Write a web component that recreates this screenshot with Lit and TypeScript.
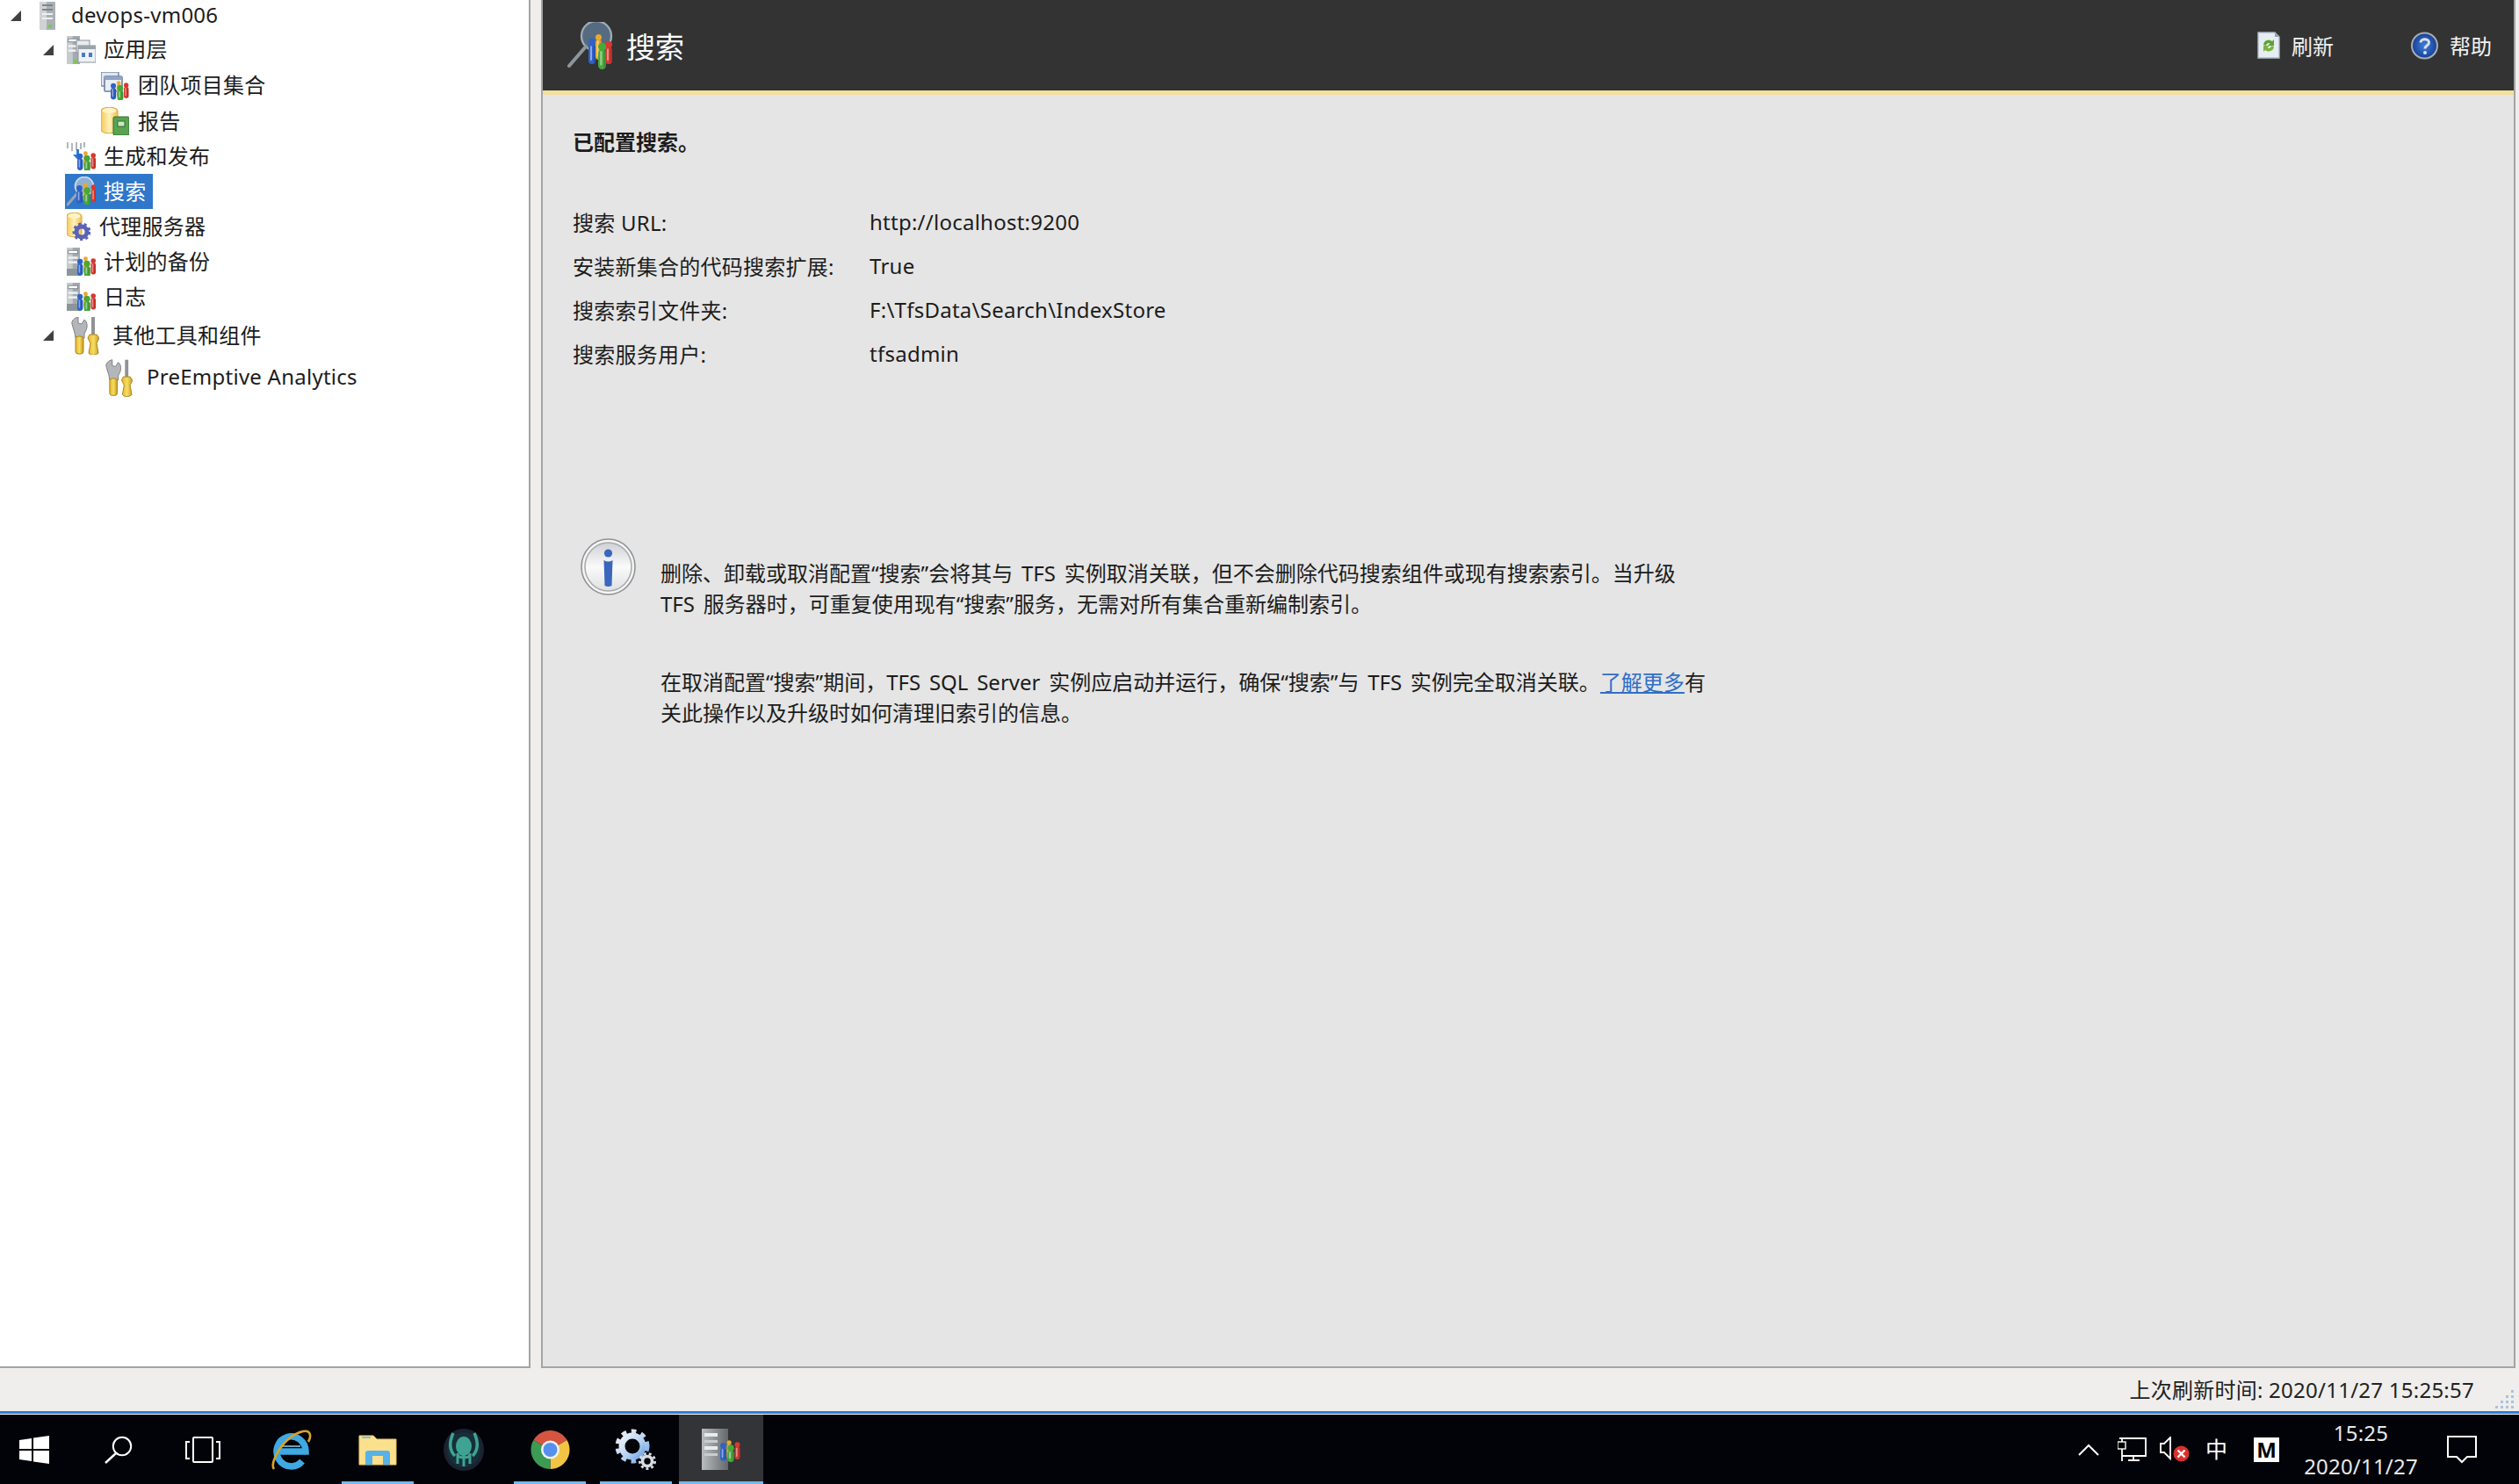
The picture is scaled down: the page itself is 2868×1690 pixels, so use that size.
import { LitElement, html, css, svg } from "lit";
import { customElement } from "lit/decorators.js";

const fig = (x: number, y: number, w: number, h: number, c: string, d: string) => svg`
  <rect x=${x} y=${y + w * 0.7} width=${w} height=${h - w * 0.7} rx=${w / 2} fill=${c} />
  <rect x=${x + w * 0.25} y=${y + w * 0.9} width=${w * 0.25} height=${h - w * 1.4} rx=${w * 0.12} fill="#fff" opacity=".45" />
  <rect x=${x + w * 0.7} y=${y + w * 0.9} width=${w * 0.3} height=${h - w * 1.1} rx=${w * 0.15} fill=${d} opacity=".35" />
  <circle cx=${x + w / 2} cy=${y + w * 0.35} r=${w * 0.5} fill=${c} />`;

// team figures in a 30x32 box
const team = (x: number, y: number, k: number) => svg`
  <g transform="translate(${x} ${y}) scale(${k})">
    ${fig(10, 0, 7, 26, "#e8a92c", "#b87a10")}
    ${fig(22, 3, 8, 25, "#d43a32", "#8e1a16")}
    ${fig(0, 4, 9, 26, "#2f62c8", "#173a8a")}
    ${fig(11, 7, 10, 25, "#47a83c", "#25701f")}
  </g>`;

const box = (w: number, h: number, body: unknown) =>
  html`<svg class="ico" width=${w} height=${h} viewBox="0 0 ${w} ${h}">${body}</svg>`;

const tower = (x: number, y: number, w: number, h: number) => svg`
  <rect x=${x} y=${y} width=${w} height=${h} fill="#a3abb1" />
  <rect x=${x} y=${y} width=${w * 0.45} height=${h} fill="#c6cbce" />
  <rect x=${x + w * 0.12} y=${y + h * 0.1} width=${w * 0.72} height=${h * 0.11} fill="#fff" stroke="#6f7980" stroke-width=".8" />
  <rect x=${x + w * 0.12} y=${y + h * 0.32} width=${w * 0.72} height=${h * 0.08} fill="#eef0f2" />
  <rect x=${x + w * 0.12} y=${y + h * 0.48} width=${w * 0.72} height=${h * 0.08} fill="#eef0f2" />`;

const serverIcon = box(18, 32, svg`
  <rect x="0" y="0" width="18" height="32" rx="1" fill="#aab0b5" />
  <rect x="0" y="0" width="8" height="32" fill="#cfd3d6" />
  <rect x="3" y="3" width="12" height="2" fill="#7e868c" /><rect x="3" y="8" width="12" height="2" fill="#7e868c" />
  <rect x="3" y="13" width="12" height="2" fill="#eef0f1" /><rect x="3" y="18" width="12" height="2" fill="#eef0f1" />
  <circle cx="12" cy="28" r="2" fill="#6fd03a" />`);

const appTierIcon = box(33, 32, svg`
  ${tower(0, 0, 15, 32)}
  <circle cx="10" cy="29" r="2" fill="#6fd03a" />
  <rect x="11" y="5" width="15" height="14" fill="#e8ebee" stroke="#8a9298" />
  <rect x="13" y="11" width="20" height="19" fill="#eef2f6" stroke="#8a9298" />
  <rect x="13" y="11" width="20" height="4" fill="#9aa3a9" />
  <rect x="17" y="19" width="4" height="5" fill="#4b7ac2" /><rect x="25" y="19" width="4" height="5" fill="#4b7ac2" />`);

const collectionIcon = box(32, 32, svg`
  <rect x="0" y="0" width="20" height="16" rx="1" fill="#dfe7f3" stroke="#7d8fa8" stroke-width="1.6" />
  <rect x="4" y="5" width="20" height="17" rx="1" fill="#e9eef6" stroke="#6f7f96" stroke-width="1.6" />
  <rect x="4" y="5" width="20" height="4" fill="#8ea4c6" />
  ${team(11, 11, 0.68)}`);

const reportIcon = box(32, 32, svg`
  <path d="M0 4 C0 -1 19 -1 19 4 V26 C19 31 0 31 0 26Z" fill="url(#gold)" stroke="#d8a73c" />
  <ellipse cx="9.5" cy="4" rx="8" ry="3" fill="#fff4c8" />
  <rect x="14" y="11" width="18" height="21" rx="1.5" fill="#5aa350" stroke="#2f6f33" />
  <rect x="19" y="16" width="8" height="6" fill="#cfe6c8" stroke="#2f6f33" />`);

const buildIcon = box(33, 32, svg`
  <g stroke="#9ea6ac" stroke-width="1.6">
    <path d="M1 0V7M6 1V10M11 0V9M16 1V8M20 0V6" />
  </g>
  <path d="M11 8V14H7L12.5 20L18 14H14V8Z" fill="#2f78d8" />
  ${team(12, 11, 0.7)}`);

const searchSel = box(33, 34, svg`
  <circle cx="20" cy="11" r="10.5" fill="#8fb0d6" stroke="#cfd9e4" stroke-width="1.6" />
  <path d="M13 18L1 32" stroke="#9aa5ae" stroke-width="3" stroke-linecap="round" />
  ${team(11, 8, 0.76)}`);

const proxyIcon = box(27, 32, svg`
  <path d="M0 4 C0 -1 17 -1 17 4 V24 C17 29 0 29 0 24Z" fill="url(#gold)" stroke="#d8a73c" />
  <ellipse cx="8.5" cy="4" rx="7" ry="3" fill="#fff4c8" />
  <circle cx="17" cy="22" r="6" fill="none" stroke="#5a62b8" stroke-width="5" />
  <circle cx="17" cy="22" r="9" fill="none" stroke="#5a62b8" stroke-width="3" stroke-dasharray="3.2 3.2" />`);

const backupIcon = box(33, 32, svg`
  ${tower(0, 0, 15, 32)}
  <rect x="0" y="24" width="15" height="8" fill="#8c959b" />
  ${team(12, 11, 0.7)}`);

const tools = (w: number, h: number) => html`<svg class="ico" width=${w} height=${h} viewBox="0 0 32 43">
  <path d="M4 18 L1 8 C0 4 4 1 8 0 L8 7 L12 8 L15 3 C19 6 19 12 16 17 L15 19 V24 H5 Z" fill="#b4b7ba" stroke="#7c8083" />
  <rect x="5" y="22" width="9" height="20" rx="3" fill="url(#gold2)" stroke="#a98518" />
  <rect x="23" y="0" width="4" height="21" fill="#8f9396" />
  <path d="M21 20 H29 L32 24 L29 30 L31 41 C28 44 22 44 20 41 L22 30 L19 24Z" fill="url(#gold2)" stroke="#a98518" />
</svg>`;

const searchHead = box(52, 54, svg`
  <circle cx="33" cy="16" r="17" fill="#566a80" stroke="#9fabb6" stroke-width="2.4" />
  <path d="M21 28L2 50" stroke="#8e969c" stroke-width="4" stroke-linecap="round" />
  ${fig(32, 15, 7, 28, "#e8a92c", "#b87a10")}
  ${fig(43, 23, 8, 25, "#d43a32", "#8e1a16")}
  ${fig(24, 20, 8, 28, "#2f62c8", "#173a8a")}
  ${fig(35, 25, 9, 29, "#47a83c", "#25701f")}`);

const refreshIcon = box(26, 31, svg`
  <path d="M1 1H20L25 6V30H1Z" fill="#e6edf3" stroke="#aeb9c2" stroke-width="1.4" />
  <path d="M20 1V6H25" fill="#8fa3b6" />
  <path d="M7 15 A6 6 0 0 1 17 11 L19 9 V16 H12 L14.5 13.5 A3 3 0 0 0 10 16Z" fill="#5fa22f" />
  <path d="M19 17 A6 6 0 0 1 9 21 L7 23 V16 H14 L11.5 18.5 A3 3 0 0 0 16 16Z" fill="#7ab33f" />`);

const helpIcon = html`<svg class="ico" width="31" height="32" viewBox="0 0 31 32">
  <circle cx="15.5" cy="16" r="14.5" fill="url(#help)" stroke="#a8adb2" stroke-width="2" />
  <path d="M11 12.5 C11 7.5 20.5 7.5 20.5 12.5 C20.5 16 16 15.5 16 19.5" fill="none" stroke="#d8dfe9" stroke-width="3" />
  <circle cx="16" cy="24" r="2" fill="#d8dfe9" />
</svg>`;

const infoIcon = html`<svg class="ico" width="63" height="65" viewBox="0 0 63 65">
  <ellipse cx="31.5" cy="32.5" rx="30.5" ry="31.5" fill="#f6f6f6" stroke="#8f9295" stroke-width="1.6" />
  <ellipse cx="31.5" cy="32.5" rx="26.5" ry="27.5" fill="url(#silver)" stroke="#a9abae" stroke-width="1.6" />
  <circle cx="31.5" cy="17" r="4.6" fill="#3a66bd" />
  <path d="M26.5 25 Q31.5 28 36.5 25 L35.5 54 Q31.5 56 27.5 54 Z" fill="#3a66bd" />
</svg>`;

const winIcon = box(34, 32, svg`
  <path d="M0 5 L14 3 V15 H0Z M16 2.6 L34 0 V15 H16Z M0 17 H14 V29 L0 27Z M16 17 H34 V32 L16 29.4Z" fill="#fff" />`);
const findIcon = box(34, 32, svg`
  <circle cx="21" cy="12" r="10.2" fill="none" stroke="#fff" stroke-width="2" />
  <path d="M14 20L2 31" stroke="#fff" stroke-width="2.4" />`);
const taskIcon = box(40, 30, svg`
  <rect x="9" y="1" width="22" height="28" rx="1" fill="none" stroke="#fff" stroke-width="2" />
  <path d="M5 6H1V25H5M35 6H39V25H35" fill="none" stroke="#fff" stroke-width="2" />`);
const ieIcon = box(46, 46, svg`
  <path d="M7 25H39A16.5 17 0 1 0 35 36" fill="none" stroke="#3fa9e2" stroke-width="7.5" />
  <path d="M11 19H33" stroke="#8bd4f5" stroke-width="1.5" />
  <path d="M3 45C-3 38 14 7 36 2C46 0 45 9 42 14" fill="none" stroke="#d7a52a" stroke-width="2.6" />`);
const folderIcon = box(44, 36, svg`
  <path d="M1 2H17L21 6H43V35H1Z" fill="#fbe08d" stroke="#f0c860" stroke-width="1" />
  <rect x="4" y="3" width="10" height="2" fill="#7cc0d8" />
  <path d="M8 35V22C8 20 9 19 11 19H33C35 19 36 20 36 22V35H28V25H16V35Z" fill="#56b2e8" />`);
const krakenIcon = box(46, 48, svg`
  <ellipse cx="23" cy="24" rx="23" ry="24" fill="#1b2230" />
  <ellipse cx="23" cy="24" rx="19" ry="20" fill="#173038" />
  <ellipse cx="23" cy="20" rx="9" ry="11" fill="#3fa393" />
  <path d="M11 5C6 16 7 25 13 31M35 5C40 16 39 25 33 31" fill="none" stroke="#3fa393" stroke-width="3.5" />
  <path d="M16 28V40M23 30V43M30 28V40M16 30C18 34 28 34 30 30" fill="none" stroke="#3fa393" stroke-width="3" />`);
const chromeIcon = box(45, 46, svg`
  <path d="M22.5 23L3.45 12A22 22 0 0 1 41.55 12Z" fill="#d65540" />
  <path d="M22.5 23L41.55 12A22 22 0 0 1 22.5 45Z" fill="#f2c443" />
  <path d="M22.5 23L22.5 45A22 22 0 0 1 3.45 12Z" fill="#3c9a55" />
  <circle cx="22.5" cy="23" r="10.5" fill="#f0f2f5" />
  <circle cx="22.5" cy="23" r="8" fill="#5590ec" />`);
const gearIcon = box(48, 47, svg`
  <circle cx="20" cy="20" r="12" fill="none" stroke="url(#gear)" stroke-width="7" />
  <circle cx="20" cy="20" r="17" fill="none" stroke="url(#gear)" stroke-width="5" stroke-dasharray="5.6 5.6" />
  <circle cx="37" cy="37" r="5.5" fill="none" stroke="#d9dee4" stroke-width="3.6" />
  <circle cx="37" cy="37" r="8.6" fill="none" stroke="#d9dee4" stroke-width="2.8" stroke-dasharray="3 3" />`);
const consoleIcon = box(44, 47, svg`
  <rect x="0" y="0" width="30" height="47" fill="url(#steel)" />
  <rect x="3" y="5" width="15" height="4" fill="#e8eaec" /><rect x="3" y="13" width="15" height="3" fill="#c9cdd0" />
  <rect x="3" y="20" width="15" height="4" fill="#e8eaec" /><rect x="3" y="28" width="15" height="3" fill="#c9cdd0" />
  ${team(21, 14, 0.75)}`);
const chevIcon = box(24, 14, svg`<path d="M1 13L12 2L23 13" fill="none" stroke="#fff" stroke-width="2" />`);
const netIcon = box(33, 27, svg`
  <path d="M2 1H32V21H5M18 21V26M12 26H25M5 1V27" fill="none" stroke="#fff" stroke-width="1.8" />
  <rect x="0" y="5" width="9" height="8" fill="#000" stroke="#fff" stroke-width="1.4" />`);
const volIcon = box(34, 29, svg`
  <path d="M1 8H5L12 1V25L5 18H1Z" fill="none" stroke="#fff" stroke-width="1.8" />
  <circle cx="24.5" cy="19.5" r="9" fill="#d9322e" />
  <path d="M20.5 15.5L28.5 23.5M28.5 15.5L20.5 23.5" stroke="#fff" stroke-width="2.4" />`);
const noteIcon = box(34, 32, svg`
  <path d="M1 1H33V24H23L17 30L11 24H1Z" fill="none" stroke="#fff" stroke-width="2" />`);
const gripIcon = box(22, 22, svg`
  <g fill="#a9c3dc">
    <rect x="18" y="1" width="3" height="3" /><rect x="18" y="7" width="3" height="3" /><rect x="12" y="7" width="3" height="3" />
    <rect x="18" y="13" width="3" height="3" /><rect x="12" y="13" width="3" height="3" /><rect x="6" y="13" width="3" height="3" />
    <rect x="18" y="19" width="3" height="3" /><rect x="12" y="19" width="3" height="3" /><rect x="6" y="19" width="3" height="3" /><rect x="0" y="19" width="3" height="3" />
  </g>`);

interface Row { h: number; ix: number; tx: number; tw?: number; icon: unknown; text: string; sel?: boolean; }
const rows: Row[] = [
  { h: 36, tw: 12, ix: 45, tx: 81, icon: serverIcon, text: "devops-vm006" },
  { h: 41, tw: 49, ix: 76, tx: 118, icon: appTierIcon, text: "应用层" },
  { h: 41, ix: 115, tx: 157, icon: collectionIcon, text: "团队项目集合" },
  { h: 40, ix: 115, tx: 157, icon: reportIcon, text: "报告" },
  { h: 40, ix: 76, tx: 118, icon: buildIcon, text: "生成和发布" },
  { h: 40, ix: 74, tx: 118, icon: searchSel, text: "搜索", sel: true },
  { h: 40, ix: 76, tx: 113, icon: proxyIcon, text: "代理服务器" },
  { h: 40, ix: 76, tx: 118, icon: backupIcon, text: "计划的备份" },
  { h: 40, ix: 76, tx: 118, icon: backupIcon, text: "日志" },
  { h: 48, tw: 49, ix: 81, tx: 128, icon: tools(32, 43), text: "其他工具和组件" },
  { h: 48, ix: 120, tx: 167, icon: tools(31, 43), text: "PreEmptive Analytics" },
];

const details: [string, string][] = [
  ["搜索 URL:", "http://localhost:9200"],
  ["安装新集合的代码搜索扩展:", "True"],
  ["搜索索引文件夹:", "F:\\TfsData\\Search\\IndexStore"],
  ["搜索服务用户:", "tfsadmin"],
];

@customElement("app-root")
export class AppRoot extends LitElement {
  static styles = css`
    :host {
      display: flex;
      flex-direction: column;
      width: 2868px;
      height: 1690px;
      overflow: hidden;
      background: #efeeec;
      color: #1c1c1c;
      font-family: "Noto Sans", "Noto Sans CJK SC", sans-serif;
      font-size: 24px;
    }
    .defs { display: block; width: 0; height: 0; }
    .ico { display: block; flex: none; filter: blur(0.45px); }
    .main { display: flex; height: 1558px; flex: none; }
    .tree {
      width: 604px;
      flex: none;
      box-sizing: border-box;
      background: #fff;
      border-right: 2px solid #a2a4a6;
      border-bottom: 2px solid #a2a4a6;
      letter-spacing: 0.25px;
    }
    .row { display: flex; align-items: center; white-space: nowrap; }
    .lead { flex: none; display: flex; align-items: center; }
    .twist {
      width: 0; height: 0;
      border-style: solid;
      border-width: 0 0 12px 12px;
      border-color: transparent transparent #404040 transparent;
    }
    .item { display: flex; align-items: center; height: 100%; }
    .item .lbl { padding-bottom: 4px; }
    .slot { flex: none; }
    .item.sel {
      background: #2f77ca;
      color: #fff;
      padding-left: 2px;
      padding-right: 7px;
    }
    .panel {
      margin-left: 12px;
      width: 2248px;
      flex: none;
      box-sizing: border-box;
      background: #e5e5e5;
      border-left: 2px solid #a2a4a6;
      border-right: 2px solid #a2a4a6;
      border-bottom: 2px solid #a2a4a6;
      display: flex;
      flex-direction: column;
    }
    .head {
      height: 103px;
      flex: none;
      background: #333333;
      color: #fff;
      display: flex;
      align-items: center;
      padding-left: 28px;
      box-sizing: border-box;
    }
    .accent { height: 5px; flex: none; background: #f4df9f; }
    .title { font-size: 33px; margin-left: 15px; }
    .spacer { flex: 1; }
    .tool { display: flex; align-items: center; color: #f2f2f2; }
    .tool .lab { margin-left: 13px; }
    .tool.a { margin-right: 88px; }
    .tool.b { margin-right: 25px; }
    .body { padding: 29px 0 0 34px; }
    .ok { height: 50px; line-height: 50px; font-weight: 700; }
    .kv {
      display: grid;
      grid-template-columns: 338px 1fr;
      grid-auto-rows: 50px;
      margin-top: 40px;
      align-items: center;
      letter-spacing: 0.25px;
    }
    .note { display: flex; margin: 186px 0 0 9px; }
    .paras { margin-left: 28px; padding-top: 23px; line-height: 34.5px; white-space: nowrap; word-spacing: 3.5px; }
    .paras p { margin: 0 0 55px; }
    a { color: #2f6fc8; text-decoration: underline; }
    .status {
      height: 49px;
      flex: none;
      display: flex;
      justify-content: flex-end;
      align-items: center;
      padding-right: 5px;
    }
    .status .txt { margin-right: 24px; margin-top: -2px; color: #222; letter-spacing: 0.25px; }
    .status .grip { align-self: flex-end; margin-bottom: 3px; }
    .sep { height: 4px; flex: none; background: #2d7dd8; border-bottom: 1px solid #fff; box-sizing: border-box; }
    .bar { flex: 1; background: #020308; display: flex; color: #e9e9e9; }
    .cell { flex: none; display: flex; align-items: center; justify-content: center; box-sizing: border-box; position: relative; }
    .start { width: 78px; }
    .find { width: 114px; }
    .tv { width: 78px; margin-right: 13px; }
    .app { width: 98px; }
    .app.run::after, .app.cur::after {
      content: "";
      position: absolute;
      left: 8px; right: 8px; bottom: 0;
      height: 3px;
      background: #76b9ed;
    }
    .app.cur { width: 96px; background: #333438; }
    .app.cur::after { left: 0; right: 0; }
    .tray { margin-left: auto; display: flex; align-items: center; padding-right: 48px; }
    .zh { font-size: 25px; color: #fff; margin: 0 30px 0 18px; line-height: 1; }
    .m {
      width: 29px; height: 28px; background: #fff; color: #000; font-weight: 700; font-size: 24px;
      display: flex; align-items: center; justify-content: center;
    }
    .clock { width: 130px; margin: 0 33px 0 28px; text-align: center; line-height: 38px; white-space: nowrap; letter-spacing: 0.2px; }
    .vol { margin: 0 0 0 15px; }
    .net { margin-left: 21px; }
  `;

  render() {
    return html`
      <svg class="defs">
        <defs>
          <linearGradient id="gold" x1="0" x2="1" y1="0" y2="0"><stop offset="0" stop-color="#f5c858" /><stop offset=".5" stop-color="#fff1b8" /><stop offset="1" stop-color="#f0c050" /></linearGradient>
          <linearGradient id="gold2" x1="0" x2="1" y1="0" y2="0"><stop offset="0" stop-color="#e2b62e" /><stop offset=".5" stop-color="#f6dc62" /><stop offset="1" stop-color="#c49a1c" /></linearGradient>
          <linearGradient id="silver" x1="0" x2="0" y1="0" y2="1"><stop offset="0" stop-color="#cfd1d4" /><stop offset=".5" stop-color="#fafafa" /><stop offset="1" stop-color="#dfe0e2" /></linearGradient>
          <radialGradient id="help"><stop offset="0" stop-color="#3f7fdc" /><stop offset="1" stop-color="#173f96" /></radialGradient>
          <linearGradient id="gear" x1="0" x2="1" y1="0" y2="1"><stop offset="0" stop-color="#eef3fa" /><stop offset=".6" stop-color="#b3d0f2" /><stop offset="1" stop-color="#6fa2e0" /></linearGradient>
          <linearGradient id="steel" x1="0" x2="1" y1="0" y2="0"><stop offset="0" stop-color="#b9bdbf" /><stop offset="1" stop-color="#63686b" /></linearGradient>
        </defs>
      </svg>
      <div class="main">
        <div class="tree">
          ${rows.map(
            (r) => html`
              <div class="row" style="height:${r.h}px">
                <div class="lead" style="width:${r.ix}px">
                  ${r.tw ? html`<div class="twist" style="margin-left:${r.tw}px"></div>` : ""}
                </div>
                <div class="item ${r.sel ? "sel" : ""}">
                  <div class="slot" style="width:${r.tx - r.ix - (r.sel ? 2 : 0)}px">${r.icon}</div>
                  <span class="lbl">${r.text}</span>
                </div>
              </div>
            `
          )}
        </div>
        <div class="panel">
          <div class="head">
            ${searchHead}
            <span class="title">搜索</span>
            <span class="spacer"></span>
            <div class="tool a">${refreshIcon}<span class="lab">刷新</span></div>
            <div class="tool b">${helpIcon}<span class="lab">帮助</span></div>
          </div>
          <div class="accent"></div>
          <div class="body">
            <div class="ok">已配置搜索。</div>
            <div class="kv">
              ${details.map(([k, v]) => html`<span>${k}</span><span>${v}</span>`)}
            </div>
            <div class="note">
              ${infoIcon}
              <div class="paras">
                <p>删除、卸载或取消配置“搜索”会将其与 TFS 实例取消关联，但不会删除代码搜索组件或现有搜索索引。当升级<br />TFS 服务器时，可重复使用现有“搜索”服务，无需对所有集合重新编制索引。</p>
                <p>在取消配置“搜索”期间，TFS SQL Server 实例应启动并运行，确保“搜索”与 TFS 实例完全取消关联。<a href="#">了解更多</a>有<br />关此操作以及升级时如何清理旧索引的信息。</p>
              </div>
            </div>
          </div>
        </div>
      </div>
      <div class="status">
        <span class="txt">上次刷新时间: 2020/11/27 15:25:57</span>
        <span class="grip">${gripIcon}</span>
      </div>
      <div class="sep"></div>
      <div class="bar">
        <div class="cell start">${winIcon}</div>
        <div class="cell find">${findIcon}</div>
        <div class="cell tv">${taskIcon}</div>
        <div class="cell app">${ieIcon}</div>
        <div class="cell app run">${folderIcon}</div>
        <div class="cell app">${krakenIcon}</div>
        <div class="cell app run">${chromeIcon}</div>
        <div class="cell app run">${gearIcon}</div>
        <div class="cell app cur">${consoleIcon}</div>
        <div class="tray">
          ${chevIcon}
          <span class="net">${netIcon}</span>
          <span class="vol">${volIcon}</span>
          <span class="zh">中</span>
          <span class="m">M</span>
          <div class="clock">15:25<br />2020/11/27</div>
          ${noteIcon}
        </div>
      </div>
    `;
  }
}
